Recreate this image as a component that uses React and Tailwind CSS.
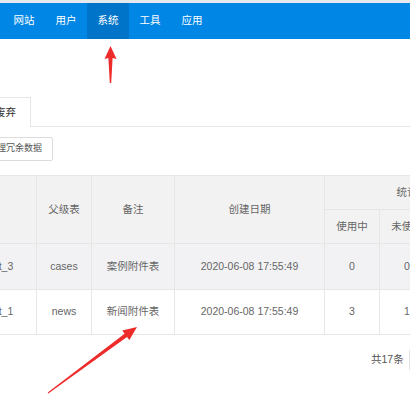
import React from "react";

const font = { fontFamily: '"Liberation Sans", "Noto Sans CJK SC", sans-serif' };

const navItems = ["网站", "用户", "系统", "工具", "应用"];

const rows = [
  { name: "attachment_3", parent: "cases", note: "案例附件表", date: "2020-06-08 17:55:49", used: 0, unused: 0, total: 0, bg: "bg-[#f2f2f5]" },
  { name: "attachment_1", parent: "news", note: "新闻附件表", date: "2020-06-08 17:55:49", used: 3, unused: 1, total: 4, bg: "bg-white" },
];

function Th({ children, className = "", ...rest }) {
  return (
    <th
      className={`border border-[#e6e6e6] bg-[#f2f2f2] text-center font-normal text-[#666] ${className}`}
      {...rest}
    >
      {children}
    </th>
  );
}

function Td({ children }) {
  return (
    <td className="border border-[#e6e6e6] text-center text-[#666] whitespace-nowrap overflow-hidden">
      {children}
    </td>
  );
}

export default function App() {
  return (
    <div
      className="relative h-[410px] w-[410px] overflow-hidden bg-white text-[10.5px]"
      style={font}
    >
      <div className="h-[3px] bg-[#e4e9ee]" />
      <nav className="flex h-[36px] bg-[#0086e5] pl-[3px]">
        {navItems.map((item) => (
          <div
            key={item}
            className={`flex w-[42px] items-center justify-center text-white ${
              item === "系统" ? "bg-[#0074c9]" : ""
            }`}
          >
            {item}
          </div>
        ))}
      </nav>

      <div className="mt-[58px] flex h-[30px] border-b border-[#e6e6e6]">
        <div className="-mb-px ml-[-20px] flex h-[30px] w-[51px] items-center justify-center border border-b-0 border-[#e6e6e6] bg-white text-[#333]">
          废弃
        </div>
      </div>

      <div className="mt-[10px] flex">
        <button className="ml-[-23px] h-[24px] whitespace-nowrap rounded-[2px] border border-[#dcdcdc] bg-white px-[10px] text-[9px] text-[#555]">
          清理冗余数据
        </button>
      </div>

      <table className="ml-[-74px] mt-[14px] table-fixed border-collapse" style={{ width: 626 }}>
        <colgroup>
          <col className="w-[110px]" />
          <col className="w-[55px]" />
          <col className="w-[83px]" />
          <col className="w-[150px]" />
          <col className="w-[55px]" />
          <col className="w-[55px]" />
          <col className="w-[55px]" />
          <col className="w-[63px]" />
        </colgroup>
        <thead>
          <tr className="h-[34px]">
            <Th rowSpan={2}>表名</Th>
            <Th rowSpan={2}>父级表</Th>
            <Th rowSpan={2}>备注</Th>
            <Th rowSpan={2}>创建日期</Th>
            <Th colSpan={3}>统计</Th>
            <Th rowSpan={2}>操作</Th>
          </tr>
          <tr className="h-[34px]">
            <Th>使用中</Th>
            <Th>未使用</Th>
            <Th>合计</Th>
          </tr>
        </thead>
        <tbody>
          {rows.map((r, i) => (
            <tr key={r.name} className={`${i === 0 ? "h-[46px]" : "h-[45px]"} ${r.bg}`}>
              <Td>{r.name}</Td>
              <Td>{r.parent}</Td>
              <Td>{r.note}</Td>
              <Td>{r.date}</Td>
              <Td>{r.used}</Td>
              <Td>{r.unused}</Td>
              <Td>{r.total}</Td>
              <Td>清理</Td>
            </tr>
          ))}
        </tbody>
      </table>

      <div className="mt-[14px] flex h-[22px] items-center whitespace-nowrap">
        <div className="ml-[371px] text-[#555]">共17条</div>
        <div className="ml-[5px] h-[22px] w-[60px] shrink-0 rounded-[2px] border border-[#e2e2e2]" />
      </div>

      <svg
        className="pointer-events-none absolute left-0 top-0"
        width="410"
        height="410"
        viewBox="0 0 410 410"
      >
        <polygon
          fill="#ee2b2b"
          points="110.5,46 116.5,59 112.6,58 111.2,83 109.8,83 108.4,58 104.5,59"
        />
        <polygon
          fill="#ee2b2b"
          points="137,327 129.4,340.1 127,336.9 48.3,393.4 47.7,392.6 124.6,333.7 122.2,330.5"
        />
      </svg>
    </div>
  );
}
